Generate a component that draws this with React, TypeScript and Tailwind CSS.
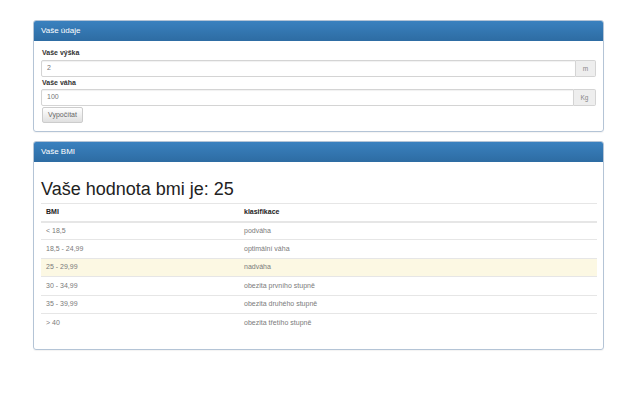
import React from 'react';

const rows = [
  { bmi: '< 18,5', label: 'podváha' },
  { bmi: '18,5 - 24,99', label: 'optimální váha' },
  { bmi: '25 - 29,99', label: 'nadváha', active: true },
  { bmi: '30 - 34,99', label: 'obezita prvního stupně' },
  { bmi: '35 - 39,99', label: 'obezita druhého stupně' },
  { bmi: '> 40', label: 'obezita třetího stupně' },
];

function PanelHeading({ title }: { title: string }) {
  return (
    <div className="h-[20px] px-[7px] flex items-center bg-gradient-to-b from-[#3a81bf] to-[#2e6da4] border-b border-[#2e6da4] rounded-t-[2px] text-white text-[8px]">
      {title}
    </div>
  );
}

function InputGroup({ value, unit, addonWidth }: { value: string; unit: string; addonWidth: string }) {
  return (
    <div className="flex h-[17px]">
      <div className="flex-1 flex items-center px-[5px] border border-[#d4d4d4] rounded-l-[2px] text-[7px] text-[#777] shadow-[inset_0_1px_1px_rgba(0,0,0,0.06)]">
        {value}
      </div>
      <div className={`${addonWidth} flex items-center justify-center bg-[#eee] border border-l-0 border-[#d4d4d4] rounded-r-[2px] text-[6.5px] text-[#888]`}>
        {unit}
      </div>
    </div>
  );
}

export default function App() {
  return (
    <div className="w-[640px] h-[400px] bg-white font-['Liberation_Sans',Arial,sans-serif] text-[#333] pt-[20px]">
      <div className="ml-[33px] w-[571px] border border-[#b4c4d6] rounded-[3px] shadow-[0_1px_1px_rgba(0,0,0,0.05)]">
        <PanelHeading title="Vaše údaje" />
        <div className="px-[7px] pt-[7px] pb-[8px]">
          <div className="text-[7px] font-bold leading-[10px] mb-[2px] pl-[1px]">Vaše výška</div>
          <InputGroup value="2" unit="m" addonWidth="w-[20px]" />
          <div className="text-[7px] font-bold leading-[10px] mt-[1px] mb-[1px] pl-[1px]">Vaše váha</div>
          <InputGroup value="100" unit="Kg" addonWidth="w-[22px]" />
          <button className="mt-[1px] ml-[1px] h-[16px] w-[41px] flex items-center justify-center border border-[#ccc] rounded-[2px] bg-gradient-to-b from-white to-[#e0e0e0] text-[7px] text-[#666]">
            Vypočítat
          </button>
        </div>
      </div>

      <div className="ml-[33px] mt-[9px] w-[571px] border border-[#b4c4d6] rounded-[3px] shadow-[0_1px_1px_rgba(0,0,0,0.05)]">
        <PanelHeading title="Vaše BMI" />
        <div className="px-[7px] pt-[7px] pb-[7px]">
          <h1 className="mt-[10px] mb-[4px] text-[18px] leading-[20px] text-[#222]">Vaše hodnota bmi je: 25</h1>
          <table className="w-[556px] mb-[10px] border-collapse text-[7px]">
            <thead>
              <tr className="h-[18px] border-t border-b-2 border-[#e6e6e6]">
                <th className="w-[198px] text-left font-bold px-[5px] text-[#222]">BMI</th>
                <th className="text-left font-bold px-[5px] text-[#222]">klasifikace</th>
              </tr>
            </thead>
            <tbody>
              {rows.map(row => (
                <tr key={row.bmi} className={`h-[18.4px] border-t border-[#e6e6e6] ${row.active ? 'bg-[#fcf8e3]' : ''}`}>
                  <td className="px-[5px] text-[#7a7a7a]">{row.bmi}</td>
                  <td className="px-[5px] text-[#7a7a7a]">{row.label}</td>
                </tr>
              ))}
            </tbody>
          </table>
        </div>
      </div>
    </div>
  );
}
